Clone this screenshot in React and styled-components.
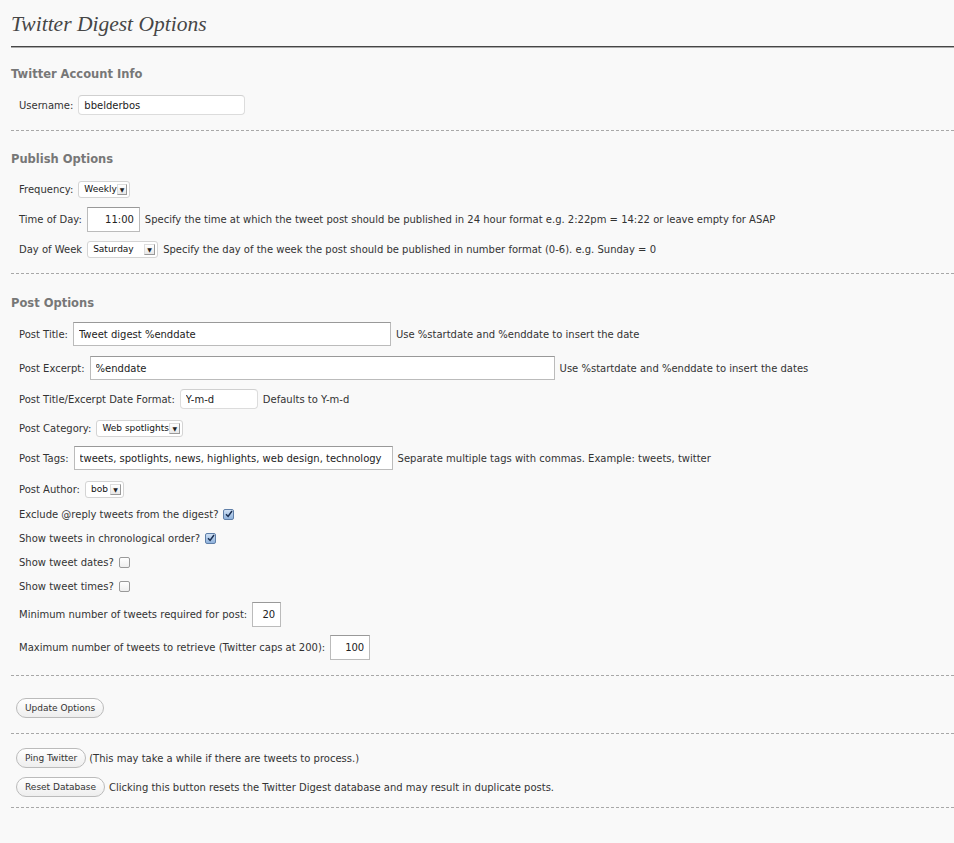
import React from 'react';
import styled, { createGlobalStyle } from 'styled-components';

const GlobalStyle = createGlobalStyle`
    body {
        margin: 0;
        background: #f9f9f9;
        font-family: "DejaVu Sans", "Liberation Sans", sans-serif;
        font-size: 10px;
        color: #333;
    }
`;

const Wrap = styled.div`
    padding: 0 0 40px 11px;
`;

const Title = styled.h2`
    margin: 0;
    padding: 10px 0 8px;
    font-family: "Liberation Serif", "DejaVu Serif", serif;
    font-style: italic;
    font-weight: normal;
    font-size: 21.5px;
    line-height: 28px;
    color: #464646;
    border-bottom: 1px solid #464646;
    box-shadow: 0 1px 0 #aaa;
`;

const Section = styled.section`
    padding-top: ${p => p.top || 0}px;
    padding-bottom: ${p => p.bottom || 0}px;
    border-bottom: 1px dashed #a8a8a8;
`;

const Heading = styled.h3`
    margin: 0 0 ${p => p.after || 5}px;
    font-family: "DejaVu Sans", sans-serif;
    font-size: 11.5px;
    font-weight: bold;
    line-height: 20px;
    color: #777;
`;

const Row = styled.div`
    display: flex;
    align-items: center;
    height: ${p => p.h || 30}px;
    margin-top: ${p => p.mt || 0}px;
    padding-left: ${p => (p.flush ? 5 : 8)}px;
    white-space: nowrap;
`;

const Label = styled.span`
    margin-right: 5px;
`;

const Help = styled.span`
    margin-left: 5px;
`;

const Note = styled.span`
    margin-left: ${p => p.gap || 0}px;
`;

const TextInput = styled.input`
    box-sizing: border-box;
    flex-shrink: 0;
    width: ${p => p.w}px;
    height: ${p => p.hgt || 20}px;
    padding: 0 5px;
    border: 1px solid ${p => (p.square ? '#bbb' : '#dcdcdc')};
    border-top-color: ${p => (p.square ? '#999' : '#d0d0d0')};
    border-radius: ${p => (p.square ? 0 : 4)}px;
    background: #fff;
    font-family: "DejaVu Sans", sans-serif;
    font-size: 10px;
    color: #222;
    text-align: ${p => (p.right ? 'right' : 'left')};
    outline: none;
`;

const SelectBox = styled.div`
    box-sizing: border-box;
    display: flex;
    align-items: center;
    justify-content: space-between;
    width: ${p => p.w}px;
    height: 17px;
    padding: 0 2px 0 5px;
    border: 1px solid #d4d4d4;
    border-radius: 3px;
    background: #fff;
    font-size: 9px;
    color: #111;
`;

const SelectArrow = styled.span`
    box-sizing: border-box;
    display: flex;
    align-items: center;
    justify-content: center;
    width: 11px;
    height: 11px;
    border: 1px solid #999;
    border-top-color: #ddd;
    border-left-color: #ddd;
    background: linear-gradient(#fff, #e8e8e8);
    font-size: 6px;
    color: #222;
`;

const Check = styled.span`
    box-sizing: border-box;
    display: inline-flex;
    align-items: center;
    justify-content: center;
    width: 11px;
    height: 11px;
    margin-left: 5px;
    border: 1px solid ${p => (p.on ? '#5f7fa8' : '#999')};
    border-radius: 2px;
    background: ${p => (p.on ? 'linear-gradient(#cfe0f4, #8fb2dc)' : 'linear-gradient(#fff, #eee)')};
`;

const Button = styled.button`
    box-sizing: border-box;
    height: 20px;
    padding: 0 8px;
    border: 1px solid #bbb;
    border-radius: 11px;
    background: linear-gradient(#fff, #eee);
    font-family: "DejaVu Sans", sans-serif;
    font-size: 9px;
    color: #333;
`;

const Select = ({ w, value }) => (
    <SelectBox w={w}>
        <span>{value}</span>
        <SelectArrow>▼</SelectArrow>
    </SelectBox>
);

const Checkbox = ({ on }) => (
    <Check on={on}>
        {on && (
            <svg width="8" height="8" viewBox="0 0 8 8">
                <path d="M1 4.2 L3.1 6.4 L7 1" fill="none" stroke="#1a2f52" strokeWidth="1.5" />
            </svg>
        )}
    </Check>
);

const App = () => {
    return (
        <Wrap>
            <GlobalStyle />
            <Title>Twitter Digest Options</Title>

            <Section top={17} bottom={10}>
                <Heading after={6}>Twitter Account Info</Heading>
                <Row>
                    <Label>Username:</Label>
                    <TextInput w={167} defaultValue="bbelderbos" />
                </Row>
            </Section>

            <Section top={18} bottom={9}>
                <Heading>Publish Options</Heading>
                <Row>
                    <Label>Frequency:</Label>
                    <Select w={52} value="Weekly" />
                </Row>
                <Row>
                    <Label>Time of Day:</Label>
                    <TextInput w={53} hgt={25} square right defaultValue="11:00" />
                    <Help>Specify the time at which the tweet post should be published in 24 hour format e.g. 2:22pm = 14:22 or leave empty for ASAP</Help>
                </Row>
                <Row>
                    <Label>Day of Week</Label>
                    <Select w={71} value="Saturday" />
                    <Help>Specify the day of the week the post should be published in number format (0-6). e.g. Sunday = 0</Help>
                </Row>
            </Section>

            <Section top={19} bottom={16}>
                <Heading after={0}>Post Options</Heading>
                <Row h={24} mt={9}>
                    <Label>Post Title:</Label>
                    <TextInput w={318} hgt={24} square defaultValue="Tweet digest %enddate" />
                    <Help>Use %startdate and %enddate to insert the date</Help>
                </Row>
                <Row h={24} mt={10}>
                    <Label>Post Excerpt:</Label>
                    <TextInput w={465} hgt={24} square defaultValue="%enddate" />
                    <Help>Use %startdate and %enddate to insert the dates</Help>
                </Row>
                <Row h={24} mt={7}>
                    <Label>Post Title/Excerpt Date Format:</Label>
                    <TextInput w={78} defaultValue="Y-m-d" />
                    <Help>Defaults to Y-m-d</Help>
                </Row>
                <Row h={24} mt={5}>
                    <Label>Post Category:</Label>
                    <Select w={87} value="Web spotlights" />
                </Row>
                <Row h={24} mt={6}>
                    <Label>Post Tags:</Label>
                    <TextInput w={319} hgt={24} square defaultValue="tweets, spotlights, news, highlights, web design, technology" />
                    <Help>Separate multiple tags with commas. Example: tweets, twitter</Help>
                </Row>
                <Row h={24} mt={7}>
                    <Label>Post Author:</Label>
                    <Select w={39} value="bob" />
                </Row>
                <Row h={24} mt={1}>
                    Exclude @reply tweets from the digest?
                    <Checkbox on />
                </Row>
                <Row h={24}>
                    Show tweets in chronological order?
                    <Checkbox on />
                </Row>
                <Row h={24}>
                    Show tweet dates?
                    <Checkbox />
                </Row>
                <Row h={24}>
                    Show tweet times?
                    <Checkbox />
                </Row>
                <Row h={24} mt={4}>
                    <Label>Minimum number of tweets required for post:</Label>
                    <TextInput w={29} hgt={25} square right defaultValue="20" />
                </Row>
                <Row h={24} mt={9}>
                    <Label>Maximum number of tweets to retrieve (Twitter caps at 200):</Label>
                    <TextInput w={40} hgt={25} square right defaultValue="100" />
                </Row>
            </Section>

            <Section top={17} bottom={10}>
                <Row flush>
                    <Button>Update Options</Button>
                </Row>
            </Section>

            <Section top={9} bottom={6}>
                <Row flush>
                    <Button>Ping Twitter</Button>
                    <Note gap={3}>(This may take a while if there are tweets to process.)</Note>
                </Row>
                <Row flush h={28}>
                    <Button>Reset Database</Button>
                    <Note gap={4}>Clicking this button resets the Twitter Digest database and may result in duplicate posts.</Note>
                </Row>
            </Section>
        </Wrap>
    );
};

export default App;
